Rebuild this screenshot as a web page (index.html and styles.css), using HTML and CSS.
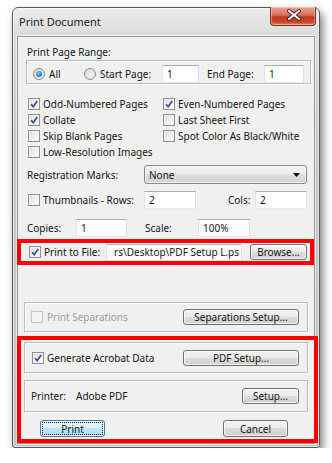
FILE: index.html
```html
<!DOCTYPE html>
<html lang="en">
<head>
    <meta charset="UTF-8">
    <title>Print Document</title>
    <link rel="stylesheet" href="styles.css">
</head>
<body>
    <div class="window">
        <div class="titlebar">
            <span class="title">Print Document</span>
            <span class="close">
                <svg width="46" height="19" viewBox="0 0 46 19">
                    <path d="M19 5 L29 13 M29 5 L19 13" stroke="#4a1c12" stroke-width="4" stroke-linecap="round"/>
                    <path d="M19 5 L29 13 M29 5 L19 13" stroke="#fff" stroke-width="2.2" stroke-linecap="round"/>
                </svg>
            </span>
        </div>
        <div class="client">
            <div class="caption">Print Page Range:</div>
            <div class="group range">
                <span class="radio on"></span><span class="lbl lbl-all">All</span>
                <span class="radio"></span><span class="lbl lbl-start">Start Page:</span>
                <span class="field w-start">1</span>
                <span class="lbl lbl-end">End Page:</span>
                <span class="field w-end">1</span>
            </div>

            <div class="options">
                <div class="opt"><span class="cb on"></span>Odd-Numbered Pages</div>
                <div class="opt"><span class="cb on"></span>Even-Numbered Pages</div>
                <div class="opt"><span class="cb on"></span>Collate</div>
                <div class="opt"><span class="cb"></span>Last Sheet First</div>
                <div class="opt"><span class="cb"></span>Skip Blank Pages</div>
                <div class="opt"><span class="cb"></span>Spot Color As Black/White</div>
                <div class="opt"><span class="cb"></span>Low-Resolution Images</div>
            </div>

            <div class="row reg">
                <span class="lbl lbl-reg">Registration Marks:</span>
                <span class="select">None
                    <svg width="7" height="4" viewBox="0 0 7 4"><path d="M0 0 H7 L3.5 4 Z" fill="#000"/></svg>
                </span>
            </div>

            <div class="row thumbs">
                <span class="cb"></span><span class="lbl lbl-rows">Thumbnails - Rows:</span>
                <span class="field w-52">2</span>
                <span class="lbl lbl-cols">Cols:</span>
                <span class="field w-52">2</span>
            </div>

            <div class="row copies">
                <span class="lbl lbl-copies">Copies:</span>
                <span class="field w-51">1</span>
                <span class="lbl lbl-scale">Scale:</span>
                <span class="field w-52">100%</span>
            </div>

            <div class="mark mark-file">
                <span class="cb on"></span><span class="lbl lbl-file">Print to File:</span>
                <span class="field path"><span>rs\Desktop\PDF Setup L.ps</span></span>
                <span class="btn btn-browse">Browse...</span>
            </div>

            <div class="group box sep">
                <span class="cb off"></span><span class="lbl disabled">Print Separations</span>
                <span class="btn btn-wide">Separations Setup...</span>
            </div>

            <div class="mark mark-pdf">
                <div class="group box acro">
                    <span class="cb on"></span><span class="lbl">Generate Acrobat Data</span>
                    <span class="btn btn-wide">PDF Setup...</span>
                </div>
                <div class="group box printer">
                    <span class="lbl lbl-printer">Printer:</span><span class="lbl">Adobe PDF</span>
                    <span class="btn btn-setup">Setup...</span>
                </div>
                <div class="actions">
                    <span class="btn btn-print"><span class="focus">Print</span></span>
                    <span class="btn btn-cancel">Cancel</span>
                </div>
            </div>
        </div>
    </div>
</body>
</html>
```

FILE: styles.css
```css
body { margin: 0; background: #fff; font-family: "Noto Sans", sans-serif; font-size: 10px; color: #151515; }

.window {
    box-sizing: border-box; width: 308px; height: 441px; margin: 7px 0 0 12px;
    padding: 0 4px 3px; border: 1px solid #5a5a5a; border-radius: 6px 6px 3px 3px;
    background: linear-gradient(#ececec 0, #dcdcdc 26px, #c9c9c9 120px, #c2c2c2 100%);
    box-shadow: inset 0 0 0 1px rgba(255,255,255,.55), 3px 5px 9px rgba(0,0,0,.5);
}
.titlebar { display: flex; justify-content: space-between; align-items: flex-start; height: 28px; }
.title { margin: 6px 0 0 2px; font-size: 11px; line-height: 16px; color: #1a1a1a; }
.close {
    box-sizing: border-box; width: 46px; height: 19px; margin: -1px -1px 0 0;
    border: 1px solid #7e2a1c; border-top: 0; border-radius: 0 0 4px 4px;
    background: linear-gradient(#eaa392 0, #d8705a 45%, #c2361d 55%, #c9492c 85%, #de8a6c 100%);
    box-shadow: inset 0 0 0 1px rgba(255,255,255,.35);
}
.close svg { display: block; margin: -1px 0 0 -1px; }

.client {
    box-sizing: border-box; height: 408px; padding-top: 7px;
    border: 1px solid #979797; background: #f0f0f0;
    box-shadow: 0 0 0 1px rgba(255,255,255,.6);
}
.caption { margin-left: 9px; line-height: 16px; }

.group { box-sizing: border-box; border: 1px solid #bdbdbd; box-shadow: inset 1px 1px 0 #fff, 1px 1px 0 #fff; }
.range { display: flex; align-items: center; width: 285px; height: 24px; margin-left: 8px; padding-top: 4px; }

.lbl { white-space: nowrap; }
.lbl-all { width: 35px; margin-left: 4px; }
.lbl-start { width: 62px; margin-left: 4px; }
.lbl-end { width: 57px; margin-left: 8px; }

.radio {
    position: relative; box-sizing: border-box; width: 12px; height: 12px; flex: none;
    border: 1px solid #8c8e8f; border-radius: 50%;
    background: radial-gradient(circle at 60% 60%, #f6f6f6, #d2d2d2);
}
.range .radio:first-child { margin-left: 6px; }
.radio.on::after {
    content: ""; position: absolute; left: 2px; top: 2px; width: 6px; height: 6px; border-radius: 50%;
    background: radial-gradient(circle at 40% 35%, #7fd0ff, #1f72c3 70%, #17508d);
}

.field {
    box-sizing: border-box; display: flex; align-items: center; height: 18px; padding-left: 4px; flex: none;
    background: #fff; border: 1px solid; border-color: #abadb3 #dbdfe6 #e3e9ef #e2e3ea; white-space: nowrap;
}
.w-start { width: 37px; }
.w-end { width: 40px; }
.w-51 { width: 51px; }
.w-52 { width: 52px; }

.cb {
    position: relative; box-sizing: border-box; width: 12px; height: 12px; margin-right: 3px; flex: none;
    border: 1px solid #8e8f8f; background: linear-gradient(135deg, #d9d9d9, #f7f7f7 70%, #fff);
    box-shadow: inset 0 0 0 1px #f2f2f2;
}
.cb.on::after {
    content: ""; position: absolute; left: 1px; top: 1px; width: 8px; height: 8px;
    background: url("data:image/svg+xml,%3Csvg xmlns='http://www.w3.org/2000/svg' width='8' height='8'%3E%3Cpath d='M1 4.2 L3.2 6.6 L7.2 1' fill='none' stroke='%233a4f8c' stroke-width='1.7'/%3E%3C/svg%3E");
}
.cb.off { border-color: #c4c4c4; background: #f4f4f4; box-shadow: none; }
.disabled { color: #9d9d9d; }

.options { display: grid; grid-template-columns: 135px auto; grid-auto-rows: 16px; margin: 12px 0 0 10px; }
.opt { display: flex; align-items: center; white-space: nowrap; }

.row { display: flex; align-items: center; }
.reg { height: 19px; margin-top: 5px; padding-left: 9px; }
.lbl-reg { width: 117px; }
.select {
    box-sizing: border-box; display: flex; align-items: center; justify-content: space-between;
    width: 163px; height: 19px; padding: 0 6px 0 4px;
    border: 1px solid #8a8a8a; border-radius: 3px;
    background: linear-gradient(#f3f3f3 0, #ececec 49%, #dfdfdf 50%, #d3d3d3 100%);
    box-shadow: inset 0 0 0 1px rgba(255,255,255,.7);
}

.thumbs { height: 18px; margin-top: 7px; padding-left: 10px; }
.lbl-rows { width: 101px; }
.lbl-cols { width: 27px; margin-left: 32px; }

.copies { height: 18px; margin-top: 10px; padding-left: 9px; }
.lbl-copies { width: 49px; }
.lbl-scale { width: 53px; margin-left: 18px; }

.mark { box-sizing: border-box; border: 4px solid #ff0000; }
.mark-file { display: flex; align-items: center; width: 297px; height: 26px; margin: 2px 0 0 -1px; padding-left: 8px; }
.lbl-file { width: 62px; }
.path { justify-content: flex-end; width: 136px; height: 17px; padding: 0 2px 0 0; overflow: hidden; }
.path span { flex: none; }

.btn {
    box-sizing: border-box; display: flex; align-items: center; justify-content: center; height: 16px; flex: none;
    border: 1px solid #707070; border-radius: 3px; white-space: nowrap;
    background: linear-gradient(#f2f2f2 0, #ebebeb 49%, #dddddd 50%, #cfcfcf 100%);
    box-shadow: inset 0 0 0 1px rgba(255,255,255,.75);
}
.btn-browse { width: 57px; margin-left: 8px; }
.btn-wide { width: 116px; margin: 0 8px 0 auto; }
.btn-setup { width: 57px; margin: 0 8px 0 auto; }

.box { display: flex; align-items: center; width: 284px; }
.sep { height: 30px; margin: 37px 0 0 6px; padding-left: 6px; }
.sep .cb { margin-right: 4px; }

.mark-pdf { width: 301px; height: 107px; margin: 4px 0 0 -1px; }
.acro { height: 31px; margin: 2px 0 0 3px; padding-left: 7px; }
.printer { height: 32px; margin: 7px 0 0 3px; padding-left: 6px; }
.lbl-printer { width: 45px; }
.actions { display: flex; margin-top: 8px; }
.btn-print {
    width: 65px; height: 17px; margin-left: 19px; border-color: #3c7fb1;
    background: linear-gradient(#eaf6fd 0, #d9f0fc 49%, #bee6fd 50%, #a7d9f5 100%);
}
.focus { box-sizing: border-box; display: flex; align-items: center; justify-content: center; width: 59px; height: 11px; outline: 1px dotted #222; }
.btn-cancel { width: 65px; height: 17px; margin-left: 118px; }
```
